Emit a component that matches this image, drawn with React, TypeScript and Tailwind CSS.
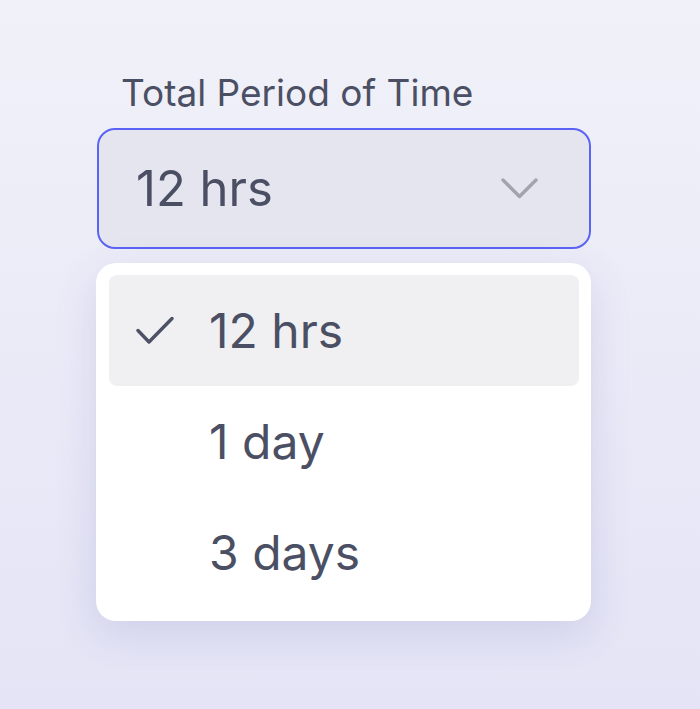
import * as React from "react";

const options = ["12 hrs", "1 day", "3 days"];

function Chevron() {
  return (
    <svg width="37" height="21" viewBox="0 0 37 21" fill="none" className="shrink-0">
      <path d="M2 2 L18.5 18.5 L35 2" stroke="#a3a3ad" strokeWidth="3.4" strokeLinecap="round" strokeLinejoin="round" />
    </svg>
  );
}

function Check() {
  return (
    <svg width="38" height="29" viewBox="0 0 38 29" fill="none" className="shrink-0">
      <path d="M2 14.5 L13 26 L36 2.5" stroke="#4d5166" strokeWidth="3.4" strokeLinecap="round" strokeLinejoin="round" />
    </svg>
  );
}

export default function App() {
  const [selected] = React.useState("12 hrs");

  return (
    <div
      className="min-h-[709px] w-full bg-gradient-to-b from-[#f1f1f9] to-[#e4e4f6] pt-[71px] pl-[96px]"
      style={{ fontFamily: "Inter, 'Noto Sans', sans-serif" }}
    >
      <div className="w-[495px]">
        <div className="pl-[25px] text-[37px] leading-[44px] text-[#4b4f64]">Total Period of Time</div>

        <button className="mt-[13px] ml-[1px] flex h-[121px] w-[494px] items-center justify-between rounded-[18px] border-[2.5px] border-[#5b63f6] bg-[#e5e5ef] pl-[37px] pr-[51px] text-left">
          <span className="text-[49px] leading-[56px] text-[#4b4f64]">{selected}</span>
          <Chevron />
        </button>

        <div className="mt-[14px] rounded-[20px] bg-white p-[12px] pl-[13px] pb-[13px] shadow-[0_12px_40px_rgba(90,90,170,0.16)]">
          {options.map((opt) => (
            <div
              key={opt}
              className={
                "flex h-[111px] items-center rounded-[8px] " +
                (opt === selected ? "bg-[#f0f0f3]" : "")
              }
            >
              <div className="flex w-[100px] shrink-0 justify-start pl-[27px]">
                {opt === selected && <Check />}
              </div>
              <span className="text-[48px] leading-[56px] text-[#4b4f64]">{opt}</span>
            </div>
          ))}
        </div>
      </div>
    </div>
  );
}
